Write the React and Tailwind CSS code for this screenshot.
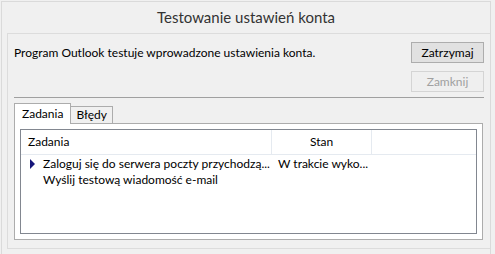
export default function App() {
  const font = { fontFamily: 'Lato, "Noto Sans", sans-serif' };
  return (
    <div className="w-[495px] h-[254px] bg-[#f0f0f0] overflow-hidden text-[12px] text-black" style={font}>
      <div className="ml-px mt-px w-[490px] h-[253px] border-l border-t border-r border-[#dadada] flex flex-col">
        <div className="h-[31px] flex items-center justify-center text-[15px] text-[#333] leading-none pb-[1px]">
          Testowanie ustawień konta
        </div>
        <div className="ml-[5px] mb-[5px] flex-1 border-l border-t border-b border-[#dcdcdc] flex flex-col pl-[6px] pr-[6px]">
          <div className="flex pt-[8px]">
            <div className="flex-1 h-[21px] flex items-center">Program Outlook testuje wprowadzone ustawienia konta.</div>
            <div className="flex flex-col gap-[8px]">
              <button className="w-[73px] h-[21px] border border-[#adadad] bg-[#e1e1e1] flex items-center justify-center text-[12px]">Zatrzymaj</button>
              <button className="w-[73px] h-[21px] border border-[#d4d4d4] bg-[#efefef] text-[#a0a0a0] flex items-center justify-center text-[12px]">Zamknij</button>
            </div>
          </div>
          <div className="mt-[5px] h-px bg-[#a0a0a0]" />
          <div className="mt-[4px] flex flex-col mr-[1px]">
            <div className="flex items-end h-[21px]">
              <div className="h-[21px] px-[7px] border-l border-t border-r border-[#acacac] bg-white flex items-center relative z-10 -mb-px pb-px">Zadania</div>
              <div className="h-[17px] px-[5px] border-t border-r border-[#acacac] bg-[#f0f0f0] flex items-center">Błędy</div>
            </div>
            <div className="h-[117px] border border-[#acacac] bg-white p-[5px]">
              <div className="h-full border border-[#828790] bg-white flex flex-col">
                <div className="h-[25px] flex border-b border-[#e5eaf0] shrink-0">
                  <div className="w-[251px] flex items-center pl-[7px] border-r border-[#e5eaf0]">Zadania</div>
                  <div className="w-[100px] flex items-center justify-center border-r border-[#e5eaf0]">Stan</div>
                  <div className="flex-1" />
                </div>
                <div className="pt-[1px]">
                  <div className="h-[16px] flex items-center">
                    <div className="w-[22px] flex justify-end pr-[8px]">
                      <svg width="5" height="10" viewBox="0 0 5 10"><path d="M0 0 L5 5 L0 10 Z" fill="#16167a" /></svg>
                    </div>
                    <div className="w-[229px] whitespace-nowrap">Zaloguj się do serwera poczty przychodzą...</div>
                    <div className="pl-[6px] whitespace-nowrap">W trakcie wyko...</div>
                  </div>
                  <div className="h-[16px] flex items-center">
                    <div className="w-[22px]" />
                    <div className="whitespace-nowrap">Wyślij testową wiadomość e-mail</div>
                  </div>
                </div>
              </div>
            </div>
          </div>
        </div>
      </div>
    </div>
  );
}
